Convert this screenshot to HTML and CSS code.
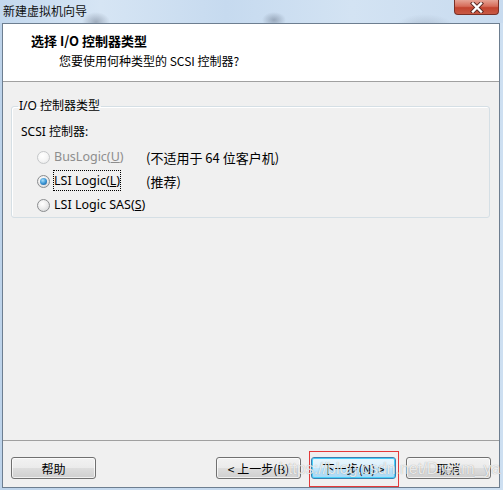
FILE: index.html
```html
<!DOCTYPE html>
<html lang="zh-CN">
<head>
    <meta charset="UTF-8">
    <title>新建虚拟机向导</title>
    <link rel="stylesheet" href="styles.css">
</head>
<body>

    <div class="window">
        <!-- Title bar -->
        <div class="titlebar">
            <span class="title">新建虚拟机向导</span>
            <div class="close">
                <svg width="18" height="11" viewBox="0 0 18 11">
                    <path d="M5 1.5 L13 9.5 M13 1.5 L5 9.5" stroke="#5a2a24" stroke-width="4.2" stroke-linecap="square" fill="none"/>
                    <path d="M5 1.5 L13 9.5 M13 1.5 L5 9.5" stroke="#ffffff" stroke-width="2.4" stroke-linecap="square" fill="none"/>
                </svg>
            </div>
        </div>

        <div class="client">
            <!-- Wizard header -->
            <div class="header">
                <div class="header-title">选择 I/O 控制器类型</div>
                <div class="header-sub">您要使用何种类型的 SCSI 控制器?</div>
            </div>

            <!-- Page content -->
            <div class="content">
                <fieldset class="group">
                    <legend>I/O 控制器类型</legend>
                    <div class="group-label">SCSI 控制器:</div>

                    <div class="option disabled">
                        <span class="radio"></span>
                        <span class="opt-label">BusLogic(<u>U</u>)</span>
                        <span class="opt-note">(不适用于 64 位客户机)</span>
                    </div>
                    <div class="option">
                        <span class="radio checked"></span>
                        <span class="opt-label"><span class="focus">LSI Logic(<u>L</u>)</span></span>
                        <span class="opt-note">(推荐)</span>
                    </div>
                    <div class="option">
                        <span class="radio"></span>
                        <span class="opt-label">LSI Logic SAS(<u>S</u>)</span>
                    </div>
                </fieldset>
            </div>

            <!-- Buttons -->
            <div class="footer">
                <button class="btn">帮助</button>
                <div class="spacer"></div>
                <button class="btn">&lt; 上一步(B)</button>
                <div class="btn-wrap">
                    <button class="btn btn-default">下一步(N) &gt;</button>
                    <div class="marker"></div>
                </div>
                <button class="btn">取消</button>
            </div>

            <div class="watermark">https://blog.csdn.net/Dream_ya</div>
        </div>
    </div>

</body>
</html>
```

FILE: styles.css
```css
* {
    margin: 0;
    padding: 0;
    box-sizing: border-box;
}

body {
    width: 503px;
    height: 490px;
    overflow: hidden;
    font-family: 'Noto Sans', 'Noto Sans CJK SC', sans-serif;
    font-size: 12px;
    color: #000;
    background: linear-gradient(90deg, #bdd3ea 0%, #c9dcf0 30%, #c2d7ed 60%, #cddff1 100%);
}

.window {
    height: 490px;
    display: flex;
    flex-direction: column;
}

/* Title bar */
.titlebar {
    height: 23px;
    display: flex;
    align-items: flex-start;
    padding-left: 3px;
    background:
        radial-gradient(ellipse 14px 10px at 96px 22px, rgba(60, 70, 90, 0.35), transparent),
        radial-gradient(ellipse 12px 8px at 274px 20px, rgba(60, 70, 90, 0.35), transparent),
        radial-gradient(ellipse 30px 14px at 425px 28px, rgba(90, 100, 120, 0.25), transparent),
        linear-gradient(90deg, #c3d8ee 0%, #d6e5f4 20%, #c6daef 45%, #d3e3f3 70%, #c8dbef 100%);
}

.title {
    font-family: 'Noto Sans CJK SC', sans-serif;
    font-size: 12px;
    line-height: 22px;
    color: #101010;
}

.close {
    margin-left: auto;
    margin-right: 4px;
    width: 45px;
    height: 15px;
    border: 1px solid #7a3026;
    border-top: none;
    border-radius: 0 0 4px 4px;
    background: linear-gradient(180deg, #e6a395 0%, #d66c5a 45%, #c2432f 55%, #c85a45 100%);
    display: flex;
    align-items: center;
    justify-content: center;
}

/* Client area */
.client {
    position: relative;
    flex: 1;
    margin: 0 3px 2px 2px;
    border: 1px solid #6d7e90;
    background-color: #f0f0f0;
    display: flex;
    flex-direction: column;
}

.header {
    height: 58px;
    background-color: #ffffff;
    border-bottom: 1px solid #a0a0a0;
    padding: 7px 0 0 28px;
}

.header-title {
    font-family: 'Noto Sans CJK SC', sans-serif;
    font-size: 13px;
    font-weight: bold;
    line-height: 20px;
}

.header-sub {
    font-family: 'Noto Sans CJK SC', sans-serif;
    line-height: 20px;
    padding-left: 28px;
}

.content {
    flex: 1;
    padding: 16px 9px 0 8px;
}

/* Group box */
.group {
    border: 1px solid #d5dfe5;
    border-radius: 3px;
    padding: 10px 0 0 9px;
    box-shadow: inset 1px 1px 0 #fff;
}

.group legend {
    margin-left: -3px;
    padding: 0 1px;
    line-height: 16px;
}

.group-label {
    line-height: 16px;
    margin-bottom: 5px;
}

.option {
    height: 24px;
    display: flex;
    align-items: center;
    padding-left: 16px;
}

.radio {
    width: 13px;
    height: 13px;
    border-radius: 50%;
    border: 1px solid #8a8c8e;
    background: radial-gradient(circle at 40% 35%, #ffffff 0%, #f0f0f0 40%, #cfd1d3 100%);
    margin-right: 4px;
    position: relative;
}

.radio.checked::after {
    content: '';
    position: absolute;
    left: 2px;
    top: 2px;
    width: 7px;
    height: 7px;
    border-radius: 50%;
    background: radial-gradient(circle at 40% 35%, #a8e0fb 0%, #3a95d4 50%, #1a4f8a 100%);
}

.opt-label {
    width: 92px;
    font-size: 12.5px;
    line-height: 16px;
}

.focus {
    outline: 1px dotted #000;
    padding: 1px 0;
}

.opt-note {
    font-family: 'Noto Sans CJK SC', sans-serif;
    font-size: 13px;
}

.option.disabled .opt-label {
    color: #8d8d8d;
}

.option.disabled .radio {
    border-color: #c5c7c9;
    background: radial-gradient(circle at 40% 35%, #ffffff 0%, #f6f6f6 50%, #e4e5e6 100%);
}

/* Footer buttons */
.footer {
    height: 47px;
    border-top: 1px solid #a0a0a0;
    display: flex;
    align-items: flex-start;
    padding: 16px 8px 0 8px;
    gap: 10px;
}

.spacer {
    flex: 1;
}

.btn {
    width: 85px;
    height: 22px;
    border: 1px solid #707070;
    border-radius: 3px;
    background: linear-gradient(180deg, #f2f2f2 0%, #ebebeb 48%, #dddddd 52%, #cfcfcf 100%);
    box-shadow: inset 0 0 0 1px rgba(255, 255, 255, 0.7);
    font-family: 'Noto Sans CJK SC', sans-serif;
    font-size: 12px;
    color: #000;
}

.btn-default {
    border-color: #3c7fb1;
    background: linear-gradient(180deg, #eaf6fd 0%, #d9f0fc 48%, #bee6fd 52%, #a7d9f5 100%);
    box-shadow: inset 0 0 0 1px #48d0f9;
}

.btn-wrap {
    position: relative;
}

.marker {
    position: absolute;
    left: -2px;
    top: -6px;
    width: 90px;
    height: 36px;
    border: 1px solid #e33a3a;
}

.watermark {
    position: absolute;
    left: 276px;
    top: 436px;
    font-family: 'Liberation Sans', sans-serif;
    font-size: 16px;
    color: rgba(255, 255, 255, 0.8);
    text-shadow: 0 0 1px rgba(0, 0, 0, 0.35);
    white-space: nowrap;
}
```
